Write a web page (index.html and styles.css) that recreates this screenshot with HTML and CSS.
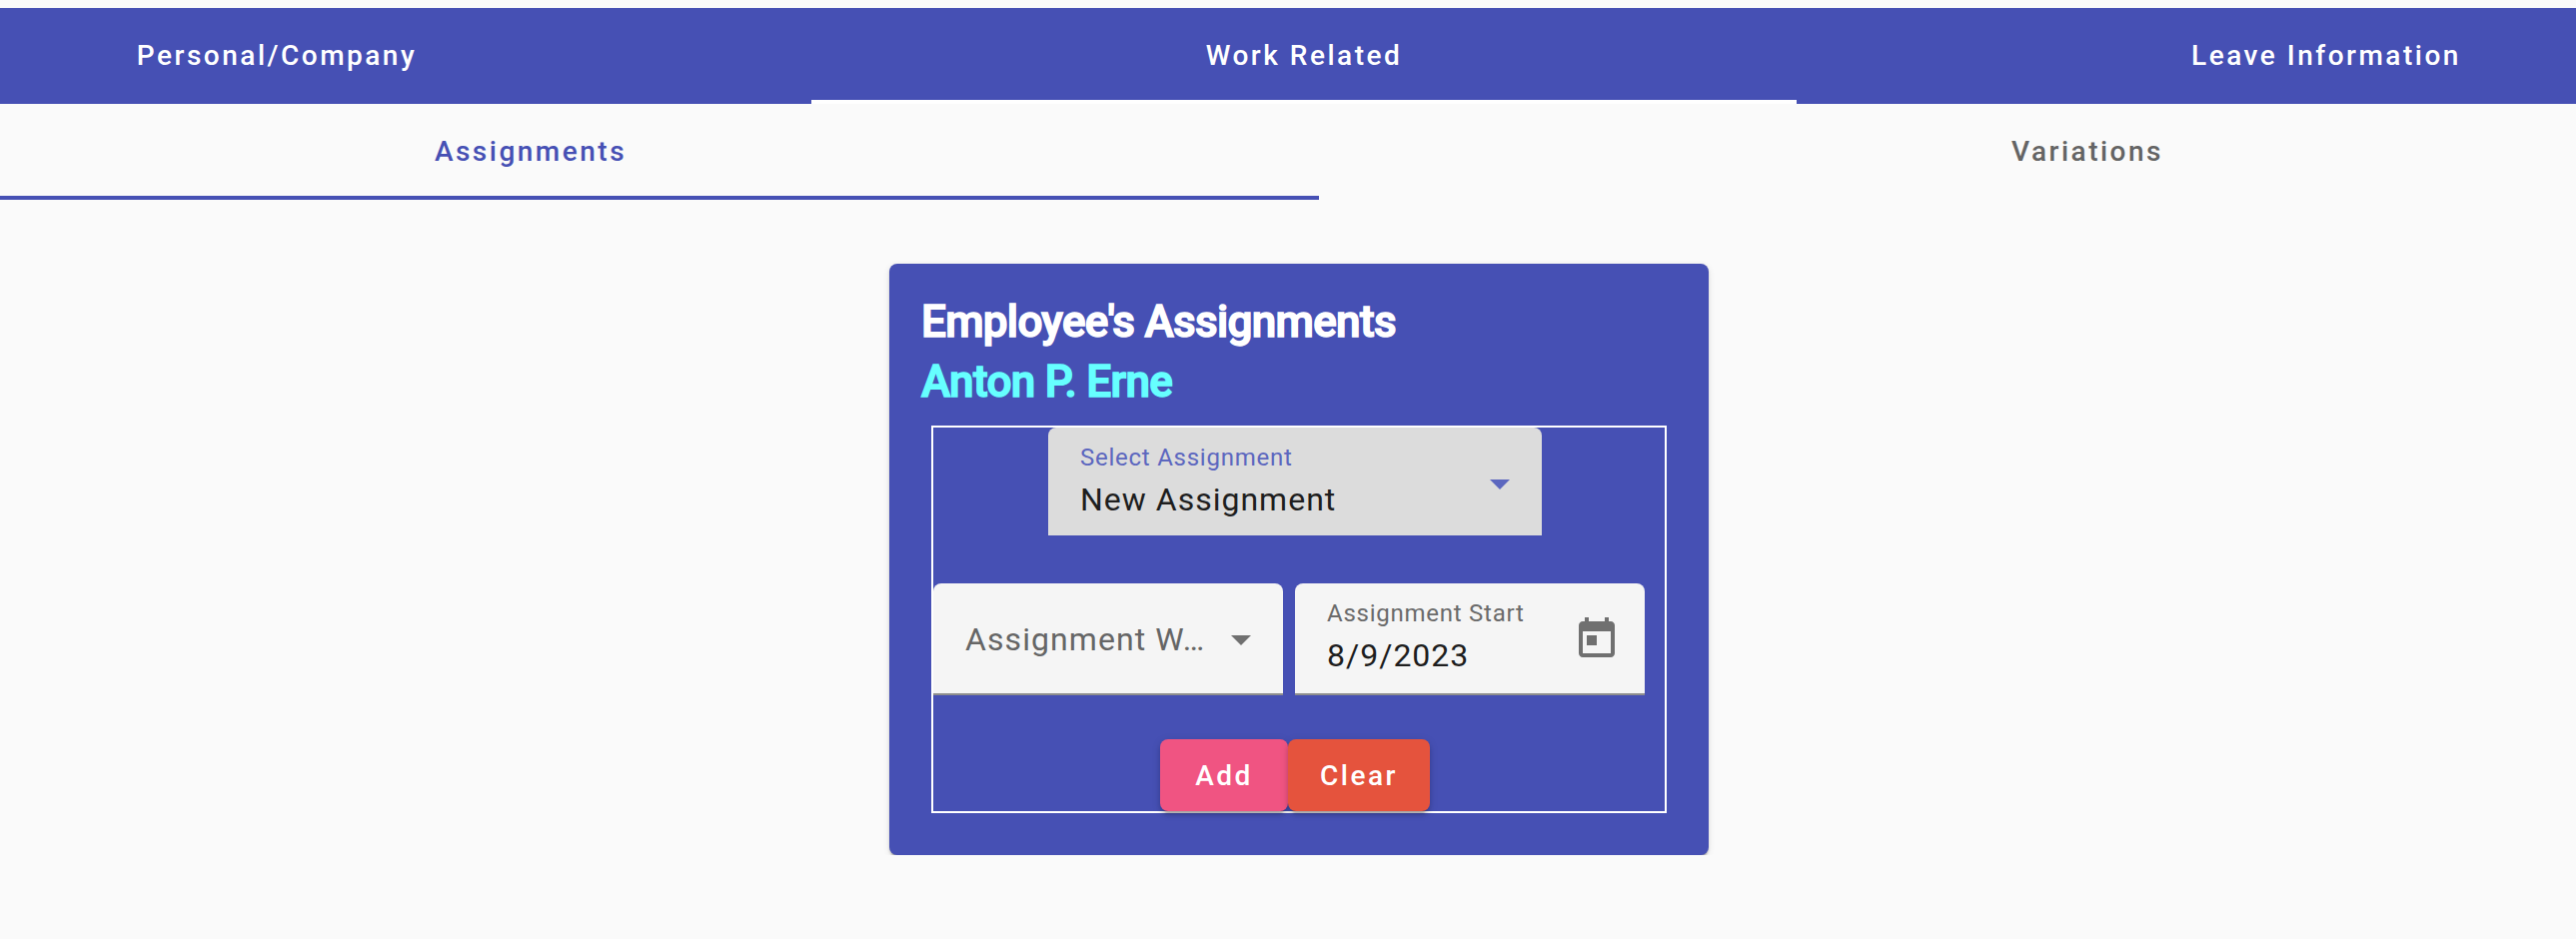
FILE: index.html
```html
<!DOCTYPE html>
<html lang="en">
<head>
<meta charset="utf-8">
<title>Employee Assignments</title>
<link rel="stylesheet" href="styles.css">
</head>
<body>
<nav class="tabs tabs-primary">
  <div class="tab tab-personal"><span class="tab-label">Personal/Company</span></div>
  <div class="tab tab-work active"><span class="tab-label">Work Related</span></div>
  <div class="tab tab-leave"><span class="tab-label">Leave Information</span></div>
</nav>
<nav class="tabs tabs-secondary">
  <div class="tab tab-assignments active"><span class="tab-label">Assignments</span></div>
  <div class="tab tab-variations"><span class="tab-label">Variations</span></div>
</nav>
<main class="content">
  <section class="card">
    <h1 class="title">Employee's Assignments</h1>
    <h2 class="title name">Anton P. Erne</h2>
    <form class="frame">
      <div class="field field-select focused">
        <div class="field-text">
          <span class="label">Select Assignment</span>
          <span class="value">New Assignment</span>
        </div>
        <svg class="arrow" viewBox="0 0 20 10"><path d="M0 0h20L10 10z"/></svg>
      </div>
      <div class="field-row">
        <div class="field">
          <div class="placeholder">Assignment W…</div>
          <svg class="arrow" viewBox="0 0 20 10"><path d="M0 0h20L10 10z"/></svg>
        </div>
        <div class="field field-date">
          <div class="field-text">
            <span class="label">Assignment Start</span>
            <span class="value">8/9/2023</span>
          </div>
          <svg class="calendar" viewBox="0 0 24 24"><path d="M19 3h-1V1h-2v2H8V1H6v2H5c-1.11 0-1.99.9-1.99 2L3 19c0 1.1.89 2 2 2h14c1.1 0 2-.9 2-2V5c0-1.1-.9-2-2-2zm0 16H5V8h14v11zM7 10h5v5H7z"/></svg>
        </div>
      </div>
      <div class="actions">
        <button type="button" class="button add">Add</button>
        <button type="button" class="button clear">Clear</button>
      </div>
    </form>
  </section>
</main>
</body>
</html>
```

FILE: styles.css
```css
* { box-sizing: border-box; }

body {
  margin: 0;
  padding-top: 8px;
  height: 940px;
  background: #fafafa;
  font-family: Roboto, sans-serif;
}

.tabs {
  display: flex;
  height: 96px;
}

.tab {
  display: flex;
  align-items: center;
  justify-content: center;
  border-bottom: 4px solid transparent;
  padding-top: 2px;
  font-size: 28px;
  font-weight: 500;
  letter-spacing: 2.5px;
  white-space: nowrap;
}

.tabs-primary { background: #4650b4; color: #fff; }
.tabs-primary .active { border-bottom-color: #fff; }
.tab-personal { width: 812px; padding-right: 258px; }
.tab-work { width: 986px; }
.tab-leave { width: 780px; padding-left: 280px; }

.tabs-secondary { color: #646464; }
.tabs-secondary .active { color: #4650b4; border-bottom-color: #4650b4; }
.tab-assignments { width: 1320px; padding-right: 258px; }
.tab-variations { width: 1258px; padding-left: 280px; }

.content {
  display: flex;
  justify-content: center;
  padding: 64px 0 0 22px;
}

.card {
  width: 820px;
  height: 592px;
  padding: 28px 32px 0;
  border-radius: 8px;
  background: #4650b4;
  box-shadow: 0 4px 2px -2px rgba(0,0,0,.2), 0 2px 2px rgba(0,0,0,.14), 0 2px 6px rgba(0,0,0,.12);
  clip-path: inset(-12px -12px 0 -12px);
}

.title {
  margin: 0;
  color: #fff;
  font-size: 44px;
  line-height: 60px;
  font-weight: 500;
  letter-spacing: -.68px;
  -webkit-text-stroke: 1.5px currentColor;
}

.name { color: #66ffff; }

.frame {
  display: flex;
  flex-direction: column;
  align-items: center;
  width: 736px;
  height: 388px;
  margin: 14px 0 0 10px;
  padding-right: 8px;
  border: 2px solid #fff;
}

.field {
  display: flex;
  align-items: center;
  width: 350px;
  height: 112px;
  padding: 2px 32px 0;
  border-bottom: 2px solid #8e8e8e;
  border-radius: 8px 8px 0 0;
  background: #f5f5f5;
}

.field-select {
  width: 494px;
  height: 108px;
  border-bottom: 0;
  background: #dcdcdc;
}

.field-text {
  display: flex;
  flex: 1;
  flex-direction: column;
  align-self: flex-start;
  padding-top: 10px;
}

.label {
  color: #6b6b6b;
  font-size: 24px;
  line-height: 36px;
  letter-spacing: .75px;
}

.focused .label { color: #5c67bf; }

.value {
  color: #1e1e1e;
  font-size: 32px;
  line-height: 48px;
  letter-spacing: 1px;
}

.placeholder {
  width: 246px;
  color: #666;
  font-size: 32px;
  line-height: 48px;
  letter-spacing: 1.08px;
  white-space: nowrap;
}

.arrow {
  width: 20px;
  height: 10px;
  margin: 2px 0 0 20px;
  fill: #707070;
}

.focused .arrow { margin-top: 4px; fill: #5c67bf; }

.field-row {
  display: flex;
  gap: 12px;
  width: 724px;
  margin-top: 48px;
}

.field-date { padding-right: 24px; }

.calendar {
  width: 48px;
  height: 48px;
  fill: #707070;
}

.actions {
  display: flex;
  margin-top: 44px;
}

.button {
  height: 72px;
  padding: 0;
  border: 0;
  border-radius: 8px;
  color: #fff;
  font: 500 28px Roboto, sans-serif;
  letter-spacing: 2.5px;
  box-shadow: 0 6px 2px -4px rgba(0,0,0,.2), 0 4px 4px rgba(0,0,0,.14), 0 2px 10px rgba(0,0,0,.12);
}

.add { width: 128px; background: #f05482; }
.clear { width: 142px; background: #e5533d; }
```
